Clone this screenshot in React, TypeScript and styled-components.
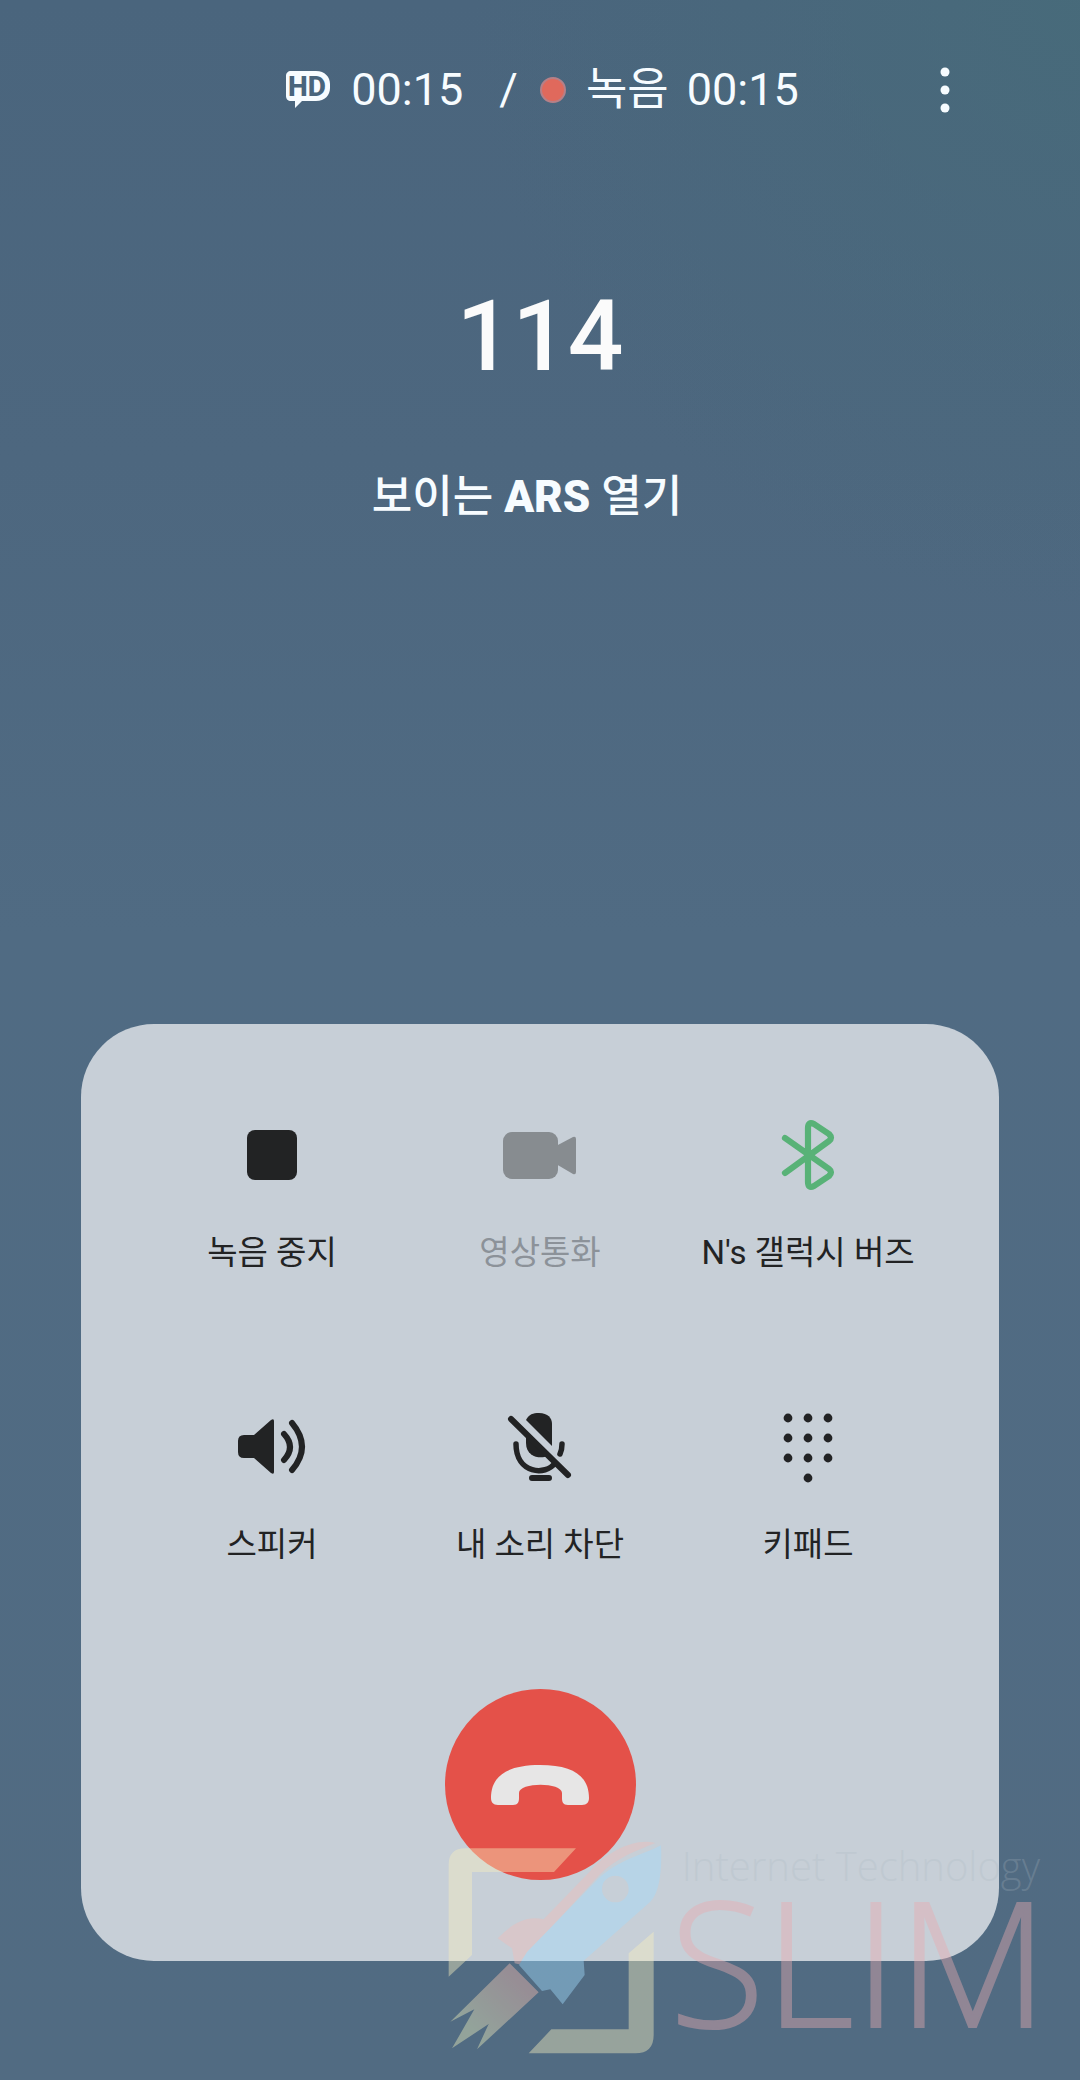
import React from "react";
import styled, { createGlobalStyle } from "styled-components";

const ink = "#222324";

const GlobalStyle = createGlobalStyle`
  *, *::before, *::after { box-sizing: border-box; }
  body {
    margin: 0;
    font-family: Roboto, "Noto Sans CJK KR", sans-serif;
    color: #f7fcff;
    background: #516b82;
  }
  button {
    margin: 0;
    padding: 0;
    border: 0;
    background: none;
    color: inherit;
    font: inherit;
    cursor: pointer;
  }
  svg { display: block; }
`;

const Screen = styled.main`
  position: relative;
  display: flex;
  flex-direction: column;
  min-height: 100vh;
  padding: 57px 0 119px;
  overflow: hidden;
  background:
    radial-gradient(circle at 100% 0%, rgba(71, 107, 122, 0.9) 0%, rgba(71, 107, 122, 0.4) 12%, rgba(71, 107, 122, 0) 26%),
    linear-gradient(180deg, #4a657d 0%, #4d677f 22%, #506b83 45%, #516b82 100%);
`;

const StatusBar = styled.header`
  display: grid;
  grid-template-columns: 1fr auto 1fr;
  align-items: center;
  height: 66px;
  font-size: 45px;
  line-height: 52px;
`;

const StatusGroup = styled.div`
  grid-column: 2;
  display: flex;
  align-items: center;
  padding-left: 4px;
  white-space: pre;
`;

const HdBadge = styled.svg`
  margin-right: 20px;
`;

const Slash = styled.span`
  margin: 0 22px 0 36px;
`;

const RecordDot = styled.span`
  width: 26px;
  height: 26px;
  margin-right: 20px;
  border: 2px solid #b58088;
  border-radius: 50%;
  background: #e0695c;
`;

const RecordTime = styled.time`
  margin-left: 18px;
`;

const MenuButton = styled.button`
  justify-self: end;
  margin-right: 110px;
  padding: 8px 20px;
`;

const CallerNumber = styled.h1`
  margin: 156px 0 0;
  font-size: 98px;
  font-weight: 500;
  line-height: 116px;
  text-align: center;
  color: #fbfbfb;
`;

const VisualArsButton = styled.button`
  align-self: center;
  margin: 72px 26px 0 0;
  font-size: 44px;
  font-weight: 500;
  line-height: 60px;

  strong { font-weight: 900; }
`;

const ControlCard = styled.section`
  display: flex;
  flex-direction: column;
  align-items: center;
  width: 85%;
  margin: auto auto 0;
  padding: 91px 57px 81px;
  border-radius: 73px;
  background: #c7cfd7;
`;

const ControlGrid = styled.div`
  display: grid;
  grid-template-columns: repeat(3, 1fr);
  row-gap: 134px;
  width: 100%;
`;

const ControlButton = styled.button<{ $iconColor?: string }>`
  display: flex;
  flex-direction: column;
  align-items: center;
  gap: 38px;
  color: ${ink};
  font-size: 33px;
  line-height: 40px;
  white-space: nowrap;

  svg { color: ${(p) => p.$iconColor ?? ink}; }

  &:disabled {
    color: #8c9299;
    cursor: default;
  }
`;

const EndCallButton = styled.button`
  display: grid;
  place-items: center;
  width: 191px;
  height: 191px;
  margin-top: 124px;
  border-radius: 50%;
  background: #e45149;
`;

const Watermark = styled.div`
  position: absolute;
  right: 32px;
  bottom: 20px;
  display: flex;
  align-items: flex-start;
  gap: 6px;
  opacity: 0.42;
  pointer-events: none;
`;

const WatermarkText = styled.div`
  display: flex;
  flex-direction: column;
  align-items: flex-end;
  font-family: "Open Sans", "Noto Sans", sans-serif;
  font-weight: 300;
`;

const Tagline = styled.span`
  margin-right: 8px;
  color: rgba(172, 184, 193, 0.6);
  font-size: 40px;
  line-height: 52px;
`;

const Brand = styled.span`
  color: #e9abb0;
  font-size: 174px;
  line-height: 136px;
  -webkit-text-stroke: 2px #e9abb0;
`;

const StopIcon = () => (
  <svg width="80" height="80" viewBox="0 0 80 80" aria-hidden="true">
    <rect x="15" y="15" width="50" height="50" rx="8" fill="currentColor" />
  </svg>
);

const VideoIcon = () => (
  <svg width="80" height="80" viewBox="0 0 80 80" fill="currentColor" aria-hidden="true">
    <rect x="3" y="17" width="55" height="47" rx="9" />
    <path d="M56 31 73 22q3-1 3 2v33q0 3-3 2L56 49z" />
  </svg>
);

const BluetoothIcon = () => (
  <svg width="80" height="80" viewBox="0 0 80 80" fill="none" stroke="currentColor" strokeWidth="6.2" strokeLinecap="round" strokeLinejoin="round" aria-hidden="true">
    <path d="M17 23 61 54q4 3 0 7L46 71q-6 3-6-4V13q0-7 6-4l15 10q4 4 0 7L17 58" />
  </svg>
);

const SpeakerIcon = () => (
  <svg width="80" height="80" viewBox="0 0 80 80" aria-hidden="true">
    <path d="M12 28h10L39 13q3-2 3 1v51q0 3-3 1L22 51H12q-6 0-6-6V34q0-6 6-6z" fill="currentColor" />
    <path d="M52 27q12 13 0 26M60 16q20 24 0 47" fill="none" stroke="currentColor" strokeWidth="6" strokeLinecap="round" />
  </svg>
);

const MicOffIcon = () => (
  <svg width="80" height="80" viewBox="0 0 80 80" aria-hidden="true">
    <path d="M26 13C29 7 33 6 39 6c9 0 13 5 13 11v22z" fill="currentColor" />
    <path d="M26 29 47 49C42 52 26 51 26 36z" fill="currentColor" />
    <path d="M16 37C16 67 46 69 55 56M62 37q0 6-2 10" fill="none" stroke="currentColor" strokeWidth="5.5" strokeLinecap="round" />
    <path d="M11 12 68 68M32 71h17" fill="none" stroke="currentColor" strokeWidth="6" strokeLinecap="round" />
  </svg>
);

const keypadDots: [number, number][] = [
  [20, 11], [40, 11], [60, 11],
  [20, 31], [40, 31], [60, 31],
  [20, 51], [40, 51], [60, 51],
  [40, 71],
];

const KeypadIcon = () => (
  <svg width="80" height="80" viewBox="0 0 80 80" fill="currentColor" aria-hidden="true">
    {keypadDots.map(([x, y]) => (
      <circle key={`${x}-${y}`} cx={x} cy={y} r="4.4" />
    ))}
  </svg>
);

const HangUpIcon = () => (
  <svg width="100" height="42" viewBox="0 0 100 42" aria-hidden="true">
    <path d="M8 41C3 41 1 38 1 34 1 12 17 1 50 1s49 11 49 33c0 4-2 7-7 7H78c-5 0-6-3-6-7v-5c0-11-43-11-43 0v5c0 4-1 7-6 7z" fill="#e7e6e6" />
  </svg>
);

const HdIcon = () => (
  <HdBadge width="46" height="40" viewBox="0 0 46 40" role="img" aria-label="HD">
    <path d="M6 1h25c9 0 14 6 14 13v4c0 7-5 13-14 13H17l-7 7v-7H6c-3 0-5-2-5-5V6c0-3 2-5 5-5z" fill="#f7fcff" />
    <text x="3" y="26" fontFamily="Roboto, sans-serif" fontSize="28" fontWeight="800" fill="#49657c">HD</text>
  </HdBadge>
);

const RocketLogo = () => (
  <svg width="217" height="220" viewBox="80 510 651 660" aria-hidden="true">
    <defs>
      <linearGradient id="flame" x1="1" y1="0" x2="0" y2="1">
        <stop offset="0.2" stopColor="#f8bdb0" />
        <stop offset="0.75" stopColor="#eef0bd" />
      </linearGradient>
    </defs>
    <path d="M85 920V585q0-50 50-50h332l-66 71H155v249z" fill="#f8f0c0" />
    <path d="M700 785v310q0 55-55 55H325l68-72h232V850z" fill="#f8f0c0" />
    <path d="M705 519C645 503 560 545 510 603L370 748C315 735 275 762 232 805L275 835 283 880 305 885 305 868 540 612C590 562 650 542 705 519z" fill="#f0bdb9" />
    <path fillRule="evenodd" d="M722 526C726 610 715 672 690 695L490 872 493 915 427 1003 390 958 365 963 296 885 320 846 530 630C590 570 675 552 722 526zM585 617a40 40 0 1 0 0 80 40 40 0 0 0 0-80z" fill="#a2ddff" />
    <path d="M268 880 355 967 170 1138 205 1062 95 1135 162 1018 90 1055z" fill="url(#flame)" />
  </svg>
);

const controls = [
  { label: "녹음 중지", icon: <StopIcon /> },
  { label: "영상통화", icon: <VideoIcon />, iconColor: "#878c90", disabled: true },
  { label: "N's 갤럭시 버즈", icon: <BluetoothIcon />, iconColor: "#58b277" },
  { label: "스피커", icon: <SpeakerIcon /> },
  { label: "내 소리 차단", icon: <MicOffIcon /> },
  { label: "키패드", icon: <KeypadIcon /> },
];

export default function App() {
  return (
    <>
      <GlobalStyle />
      <Screen lang="ko">
        <StatusBar>
          <StatusGroup>
            <HdIcon />
            <time>00:15</time>
            <Slash>/</Slash>
            <RecordDot />
            <span>녹음</span>
            <RecordTime>00:15</RecordTime>
          </StatusGroup>
          <MenuButton type="button" aria-label="더보기">
            <svg width="10" height="46" viewBox="0 0 10 46" fill="#f7fcff" aria-hidden="true">
              <circle cx="5" cy="5" r="4.5" />
              <circle cx="5" cy="23" r="4.5" />
              <circle cx="5" cy="41" r="4.5" />
            </svg>
          </MenuButton>
        </StatusBar>

        <CallerNumber>114</CallerNumber>
        <VisualArsButton type="button">
          보이는 <strong>ARS</strong> 열기
        </VisualArsButton>

        <ControlCard>
          <ControlGrid>
            {controls.map((c) => (
              <ControlButton key={c.label} type="button" disabled={c.disabled} $iconColor={c.iconColor}>
                {c.icon}
                <span>{c.label}</span>
              </ControlButton>
            ))}
          </ControlGrid>
          <EndCallButton type="button" aria-label="통화 종료">
            <HangUpIcon />
          </EndCallButton>
        </ControlCard>

        <Watermark>
          <RocketLogo />
          <WatermarkText>
            <Tagline>Internet Technology</Tagline>
            <Brand>SLIM</Brand>
          </WatermarkText>
        </Watermark>
      </Screen>
    </>
  );
}
